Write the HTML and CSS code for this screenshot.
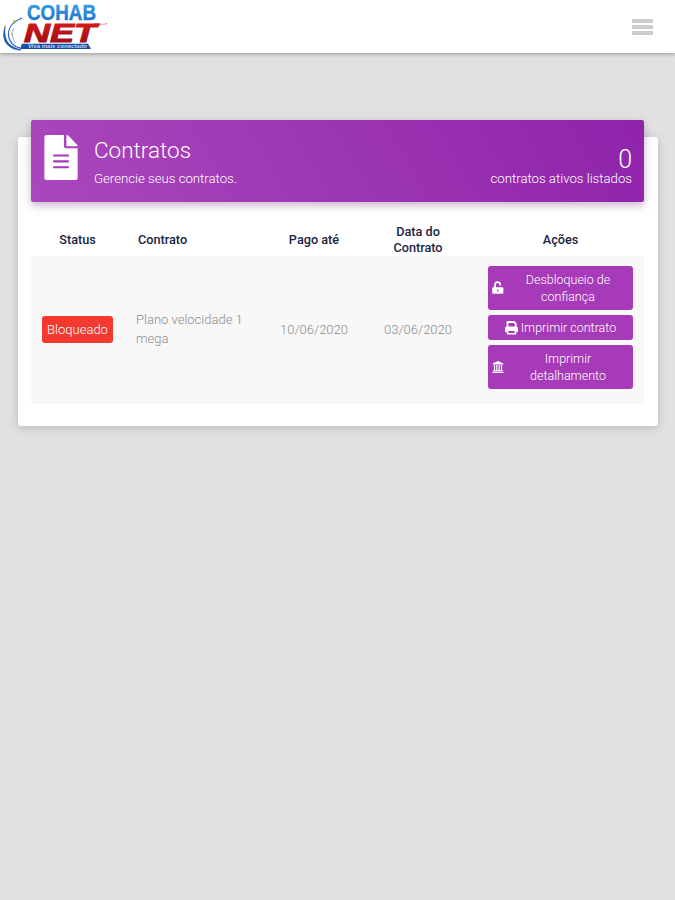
FILE: index.html
```html
<!DOCTYPE html>
<html lang="pt-br">
<head>
    <meta charset="UTF-8">
    <meta name="viewport" content="width=device-width, initial-scale=1.0">
    <title>Contratos</title>
    <link rel="stylesheet" href="styles.css">
</head>
<body>
    <!-- Barra superior -->
    <header class="topo">
        <svg class="logo" width="108" height="52" viewBox="0 0 108 52" role="img" aria-label="Cohab Net">
            <defs>
                <linearGradient id="azul" x1="0" y1="0" x2="0" y2="1">
                    <stop offset="0" stop-color="#35a5ea"/>
                    <stop offset="1" stop-color="#1c69c8"/>
                </linearGradient>
                <linearGradient id="vermelho" x1="0" y1="0" x2="0" y2="1">
                    <stop offset="0" stop-color="#e01d1d"/>
                    <stop offset="1" stop-color="#930b12"/>
                </linearGradient>
            </defs>
            <path d="M5 26C2 35 4 43 12 47C15 48.500 18 49 21 49C14 47 8 44 6 38C4.500 34 4.500 30 5 26Z" fill="#1c55b0" stroke="#1c55b0" stroke-width=".8"/>
            <path d="M20 18C11 22 7 29 9 37C11 43 15 46 20 47" fill="none" stroke="#2e6ac0" stroke-width="1.3"/>
            <path d="M14 27C11 32 12 38 16 42" fill="none" stroke="#8fb2e2"/>
            <circle cx="21" cy="17.500" r="1" fill="#2e6ac0"/>
            <circle cx="14" cy="20" r="1.200" fill="#f0b43c"/>
            <circle cx="5" cy="25.500" r="1.200" fill="#f0b43c"/>
            <circle cx="12" cy="33" r="1.200" fill="#f0b43c"/>
            <text class="logo-cohab" x="27" y="19" textLength="69" lengthAdjust="spacingAndGlyphs" fill="url(#azul)" stroke="url(#azul)">COHAB</text>
            <text class="logo-net" x="24" y="40.500" textLength="72" lengthAdjust="spacingAndGlyphs" fill="url(#vermelho)" stroke="url(#vermelho)">NET</text>
            <path d="M94 22.500H101L97 26Z" fill="#c51c20"/>
            <path d="M99 24.500L102 23.500" stroke="#7d9bd0"/>
            <path d="M103 23.500L107 22.500" stroke="#e58a8a"/>
            <path d="M22 42.800H88L91 48H20Z" fill="#174da5"/>
            <text class="logo-lema" x="28" y="47" textLength="59" lengthAdjust="spacingAndGlyphs">Viva mais conectado</text>
        </svg>
        <button class="menu" aria-label="Menu">
            <span></span>
            <span></span>
            <span></span>
        </button>
    </header>

    <main class="cartao">
        <!-- Titulo do cartao -->
        <div class="cabecalho">
            <svg class="documento" width="34" height="45" viewBox="0 0 34 46">
                <path d="M2 0H20V11.5Q20 13.5 22 13.5H34V44Q34 46 32 46H2Q0 46 0 44V2Q0 0 2 0Z" fill="#fff"/>
                <path d="M22.5 0Q24 0 25 1L33 9.5Q34 10.5 34 11.5H22.5Z" fill="#fff"/>
                <path d="M9 21H25M9 27H25M9 33H25" stroke="#a63ab8" stroke-width="2.2"/>
            </svg>
            <div class="titulo">
                <h1>Contratos</h1>
                <p>Gerencie seus contratos.</p>
            </div>
            <div class="total">
                <strong>0</strong>
                <p>contratos ativos listados</p>
            </div>
        </div>

        <!-- Tabela de contratos -->
        <table class="tabela">
            <thead>
                <tr>
                    <th class="col-status">Status</th>
                    <th class="col-contrato">Contrato</th>
                    <th class="col-data">Pago até</th>
                    <th class="col-data">Data do Contrato</th>
                    <th class="col-acoes">Ações</th>
                </tr>
            </thead>
            <tbody>
                <tr>
                    <td class="col-status"><span class="etiqueta">Bloqueado</span></td>
                    <td class="col-contrato">Plano velocidade 1 mega</td>
                    <td class="col-data">10/06/2020</td>
                    <td class="col-data">03/06/2020</td>
                    <td class="col-acoes">
                        <div class="acoes">
                            <button class="botao">
                                <svg width="12" height="14" viewBox="0 0 12 14">
                                    <path d="M3 7V4Q3 1.2 5.6 1.2Q8.2 1.2 8.2 4V4.6" fill="none" stroke="#fff" stroke-width="1.8"/>
                                    <path d="M1.3 6.2H10.2Q11.4 6.2 11.4 7.4V11.6Q11.4 12.8 10.2 12.8H1.3Q.2 12.8 .2 11.6V7.4Q.2 6.2 1.3 6.2Z" fill="#fff"/>
                                    <path d="M5.8 8.5V10.5" stroke="#a63ab8" stroke-width="1.3"/>
                                </svg>
                                <span class="duas-linhas">Desbloqueio de confiança</span>
                            </button>
                            <button class="botao baixo">
                                <svg width="13" height="14" viewBox="0 0 13 14">
                                    <path d="M2.5 6V1H9L10.7 2.7V6" fill="none" stroke="#fff" stroke-width="1.8"/>
                                    <path d="M2 5.5H11Q13 5.5 13 7.5V11H0V7.5Q0 5.5 2 5.5Z" fill="#fff"/>
                                    <path d="M2.6 9.3H10.4V12.7H2.6Z" fill="#a63ab8" stroke="#fff" stroke-width="1.6"/>
                                </svg>
                                <span>Imprimir contrato</span>
                            </button>
                            <button class="botao">
                                <svg width="12" height="14" viewBox="0 0 12 14">
                                    <path d="M6 1L11.3 3.4V4.4H.7V3.4Z" fill="#fff"/>
                                    <path d="M2.5 5V11M4.8 5V11M7.2 5V11M9.5 5V11" stroke="#fff" stroke-width="1.2"/>
                                    <path d="M1.3 10.7H10.7M.4 12.4H11.6" stroke="#fff" stroke-width="1.1"/>
                                </svg>
                                <span class="duas-linhas">Imprimir detalhamento</span>
                            </button>
                        </div>
                    </td>
                </tr>
            </tbody>
        </table>
    </main>
</body>
</html>
```
FILE: styles.css
```css
* {
    box-sizing: border-box;
}

body {
    min-height: 100vh;
    margin: 0;
    background-color: #e1e1e1;
    font-family: Roboto, sans-serif;
    font-size: 13px;
    font-weight: 300;
}

h1,
p {
    margin: 0;
    font-weight: 300;
}

/* Barra superior */
.topo {
    display: flex;
    align-items: center;
    justify-content: space-between;
    height: 53px;
    padding-right: 22px;
    background-color: #fff;
    box-shadow: 0 1px 4px rgba(0, 0, 0, 0.35);
}

.logo text {
    font-family: "Liberation Sans", Arial, sans-serif;
    font-weight: bold;
}

.logo .logo-cohab {
    font-size: 21.5px;
    stroke-width: 0.4px;
}

.logo .logo-net {
    font-size: 25px;
    font-style: italic;
    stroke-width: 1px;
}

.logo .logo-lema {
    font-size: 5px;
    font-style: italic;
    fill: #c3d3ee;
}

.menu {
    display: flex;
    flex-direction: column;
    gap: 2px;
    width: 21px;
    padding: 0;
    border: none;
    background: none;
}

.menu span {
    height: 4px;
    background-color: #cdcdcd;
}

/* Cartao branco */
.cartao {
    height: 289px;
    margin: 84px 17px 0 18px;
    padding: 0 14px 0 13px;
    background-color: #fff;
    border-radius: 3px;
    box-shadow: 0 2px 10px rgba(0, 0, 0, 0.18);
}

/* O cabecalho sobe por cima da borda do cartao */
.cabecalho {
    display: flex;
    height: 82px;
    margin-bottom: 4px;
    padding: 15px 12px 0 13px;
    color: #fff;
    background: linear-gradient(60deg, #ab47bc, #8e24aa);
    border-radius: 2px;
    box-shadow: 0 4px 12px rgba(0, 0, 0, 0.14), 0 3px 6px rgba(156, 39, 176, 0.2);
    transform: translateY(-17px);
}

.titulo {
    margin-left: 16px;
}

.titulo h1 {
    font-size: 22.5px;
    line-height: 30px;
}

.titulo p {
    margin-top: 6px;
    font-size: 13.2px;
    line-height: 16px;
}

.total {
    margin-left: auto;
    padding-top: 13px;
    text-align: right;
}

.total strong {
    display: block;
    font-size: 25px;
    font-weight: 300;
    line-height: 24px;
}

.total p {
    font-size: 13.2px;
    line-height: 14px;
}

/* Tabela */
.tabela {
    width: 613px;
    table-layout: fixed;
    border-collapse: collapse;
}

.tabela th {
    height: 33px;
    padding: 0 20px;
    color: #1b2440;
    font-size: 12.7px;
    font-weight: 500;
    line-height: 16px;
}

.tabela td {
    height: 148px;
    padding: 0 0 2px;
    color: #8c8c8c;
    text-align: center;
    line-height: 19px;
}

.tabela tbody tr {
    background-color: #f8f8f8;
}

.tabela .col-status {
    width: 93px;
}

.tabela .col-contrato {
    width: 138px;
    padding: 0 14px 2px 12px;
    text-align: left;
}

.tabela th.col-contrato {
    padding: 0 0 0 14px;
}

.tabela .col-data {
    width: 104px;
}

.tabela .col-acoes {
    padding: 0 11px 0 18px;
}

.tabela td.col-acoes {
    vertical-align: top;
}

.etiqueta {
    display: inline-block;
    width: 71px;
    color: #fff;
    background-color: #f23a30;
    border-radius: 3px;
    line-height: 27px;
}

/* Botoes de acao */
.acoes {
    display: flex;
    flex-direction: column;
    gap: 5px;
    padding-top: 10px;
}

.botao {
    display: flex;
    align-items: center;
    justify-content: center;
    gap: 3px;
    height: 44px;
    padding: 0 4px;
    color: #fff;
    background-color: #a63ab8;
    border: none;
    border-radius: 3px;
    font-family: inherit;
    font-size: 12.5px;
    font-weight: 300;
    line-height: 17.5px;
}

.botao.baixo {
    height: 25px;
}

.botao svg {
    flex: none;
}

.duas-linhas {
    flex: 1;
    padding: 0 12px;
}
```
